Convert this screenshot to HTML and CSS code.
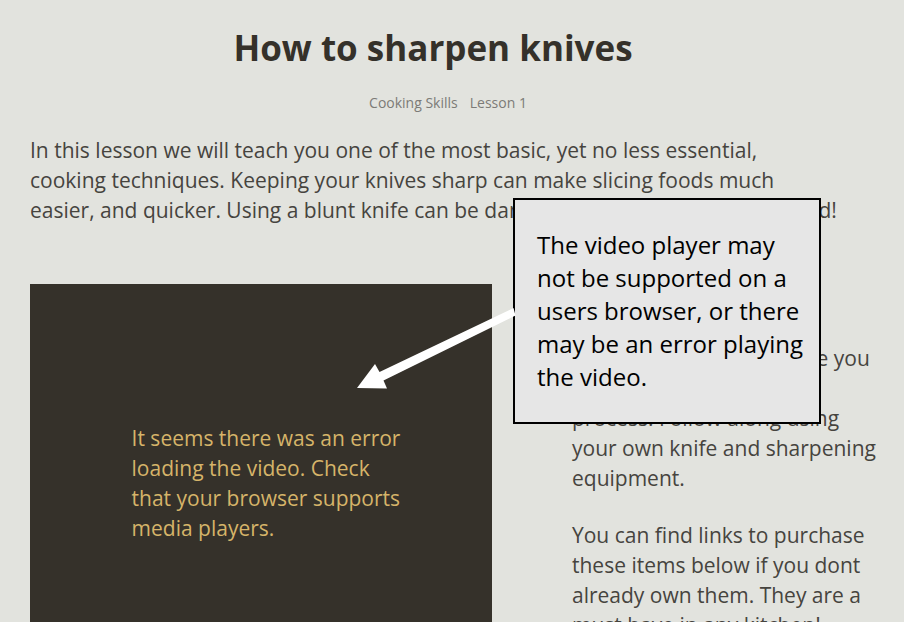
FILE: index.html
```html
<!DOCTYPE html>
<html lang="en">
<head>
<meta charset="utf-8">
<title>How to sharpen knives</title>
<link rel="stylesheet" href="styles.css">
</head>
<body>
<main class="lesson">
  <header class="lesson-header">
    <h1>How to sharpen knives</h1>
    <p class="meta"><span>Cooking Skills</span><span>Lesson 1</span></p>
  </header>
  <p class="intro">In this lesson we will teach you one of the most basic, yet no less essential,<br>
  cooking techniques. Keeping your knives sharp can make slicing foods much<br>
  easier, and quicker. Using a blunt knife can be dangerous, so keep that sharpened!</p>
  <div class="columns">
    <section class="player">
      <p>It seems there was an error<br>loading the video. Check<br>that your browser supports<br>media players.</p>
    </section>
    <section class="notes">
      <p>The video below will guide you<br>through the sharpening<br>process. Follow along using<br>your own knife and sharpening<br>equipment.</p>
      <p>You can find links to purchase<br>these items below if you dont<br>already own them. They are a<br>must have in any kitchen!</p>
    </section>
  </div>
</main>
<aside class="callout">
  <p>The video player may<br>not be supported on a<br>users browser, or there<br>may be an error playing<br>the video.</p>
  <svg class="arrow" width="160" height="84" viewBox="0 0 160 84" aria-hidden="true">
    <path d="M156.500 1 L22.500 65 L18 57 L0 81 L30 81.500 L26.500 73.500 L158.500 8.500 Z" fill="#fff"/>
  </svg>
</aside>
</body>
</html>
```
FILE: styles.css
```css
* { box-sizing: border-box; }
html { height: 100%; overflow: hidden; }
body {
  position: relative;
  margin: 0;
  height: 100%;
  overflow: hidden;
  background: #e2e3de;
  color: #46443e;
  font: 21px/30px "Open Sans", "Noto Sans", sans-serif;
}
p, h1 { margin: 0; }
.lesson { padding: 20px 24px 0 30px; }
.lesson-header { padding-right: 44px; text-align: center; }
h1 {
  color: #35312a;
  font-size: 35px;
  line-height: 56px;
  font-weight: 700;
}
.meta {
  display: flex;
  justify-content: center;
  gap: 12px;
  margin: 15px 0 20px;
  padding-left: 30px;
  color: #7c7b77;
  font-size: 14px;
  line-height: 24px;
}
.intro { white-space: nowrap; }
.columns {
  display: grid;
  grid-template-columns: 3fr 2fr;
  gap: 80px;
  margin-top: 59px;
}
.player {
  display: flex;
  justify-content: center;
  min-height: 400px;
  padding: 139px 0 0 10px;
  background: #35312a;
  color: #d6b469;
  white-space: nowrap;
}
.notes { padding-top: 59px; white-space: nowrap; }
.notes p + p { margin-top: 27px; }
.callout {
  position: absolute;
  top: 198px;
  left: 513px;
  padding: 28px 16px 29px 22px;
  border: 2px solid #000;
  background: #e6e6e6;
  color: #000;
  font: 24px/33px "Open Sans", sans-serif;
  white-space: nowrap;
}
.arrow {
  position: absolute;
  top: 107px;
  left: -158px;
}
```
